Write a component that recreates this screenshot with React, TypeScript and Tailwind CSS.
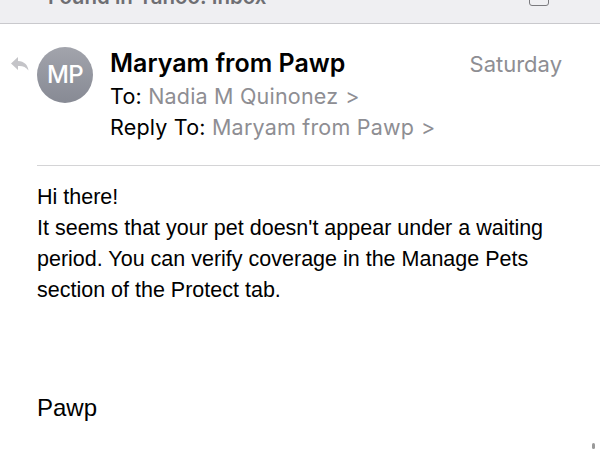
import React from 'react';

const ReplyArrow: React.FC = () => (
  <svg width="20" height="16" viewBox="0 0 20 16" className="text-[#c4c4c8]" fill="currentColor">
    <path d="M8 1 L1 7.5 L8 14 L8 10 C12.5 9.6 15.8 11 18.5 14.5 C17.8 8.8 14.2 5.3 8 5 Z" />
  </svg>
);

const Chevron: React.FC = () => <span className="ml-[7px] text-[#8e8e93]">&gt;</span>;

const App: React.FC = () => {
  return (
    <div className="w-[600px] h-[450px] overflow-hidden bg-white relative">
      {/* search result banner, scrolled mostly out of view */}
      <div className="h-[24px] bg-[#efeff2] border-b border-[#c9c9cd] relative overflow-hidden">
        <div className="absolute left-[48px] top-[-13px] text-[20.5px] font-semibold text-[#6e6e73] font-['Inter',sans-serif] leading-none">
          Found in Yahoo! Inbox
        </div>
        <div className="absolute left-[529px] top-[-10px] w-[20px] h-[16px] border-[1.5px] border-[#7a7a7e] rounded-[3px]" />
      </div>

      {/* header */}
      <div className="flex pt-[24px] pl-[10px] pr-[38px] font-['Inter',sans-serif]">
        <div className="pt-[8px] w-[27px]">
          <ReplyArrow />
        </div>
        <div className="w-[56px] h-[56px] -mt-[1px] rounded-full bg-gradient-to-b from-[#a2a4ac] to-[#878a94] flex items-center justify-center text-white text-[24px] font-medium tracking-tight shrink-0">
          MP
        </div>
        <div className="flex-1 pl-[17px]">
          <div className="flex items-baseline justify-between">
            <div className="text-[25px] font-semibold text-black leading-[31px]">Maryam from Pawp</div>
            <div className="text-[22px] text-[#8e8e93]">Saturday</div>
          </div>
          <div className="text-[21.5px] leading-[31px] text-black tracking-[0.2px]">
            To: <span className="text-[#8e8e93]">Nadia M Quinonez</span>
            <Chevron />
          </div>
          <div className="text-[21.5px] leading-[31px] text-black tracking-[0.2px]">
            Reply To: <span className="text-[#8e8e93]">Maryam from Pawp</span>
            <Chevron />
          </div>
        </div>
      </div>

      <div className="ml-[37px] mt-[22px] border-t border-[#d4d4d6]" />

      {/* body */}
      <div className="pl-[37px] pr-[37px] pt-[16px] font-['Liberation_Sans',Arial,sans-serif] text-[21.5px] leading-[31px] text-black">
        <p>Hi there!</p>
        <p>
          It seems that your pet doesn't appear under a waiting period. You can verify coverage in the
          Manage Pets section of the Protect tab.
        </p>
        <p className="mt-[86px] text-[24px]">Pawp</p>
      </div>

      <div className="absolute right-[5px] bottom-[1px] w-[3px] h-[6px] rounded-sm bg-[#9a9a9a]" />
    </div>
  );
};

export default App;
